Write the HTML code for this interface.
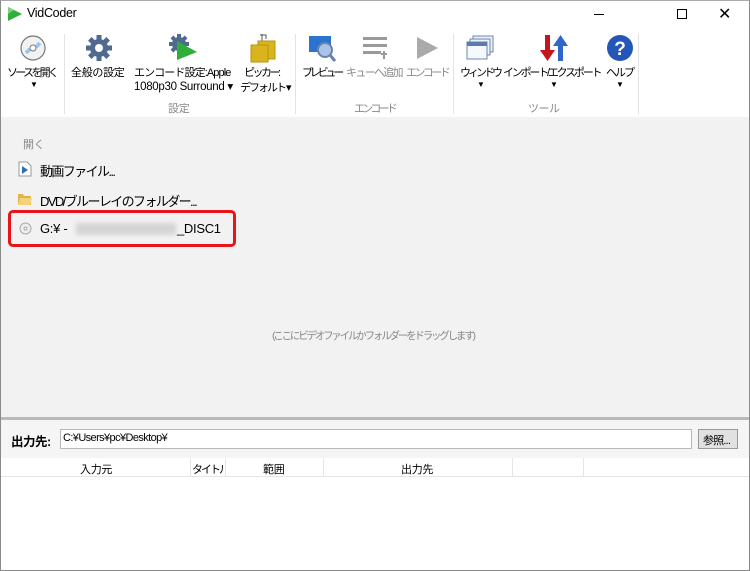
<!DOCTYPE html>
<html><head><meta charset="utf-8">
<style>
*{margin:0;padding:0;box-sizing:border-box}
body{width:750px;height:571px;position:relative;overflow:hidden;background:#fff;font-family:"Liberation Sans","Noto Sans CJK JP",sans-serif;font-size:12px;color:#000}
.a{position:absolute}
.t{position:absolute;white-space:nowrap;font-size:11px;letter-spacing:-0.3px}
.g{color:#888}
.sep{position:absolute;top:34px;width:1px;height:80px;background:#e3e3e3}
</style></head><body>
<div class="a" style="left:0;top:0;width:750px;height:571px;border:1px solid #8a8a8a;border-top-color:#aaa"></div>
<svg class="a" style="left:7px;top:6px" width="16" height="16" viewBox="0 0 16 16"><polygon points="1,1 15,8 1,15" fill="#2fae3a"/><polygon points="1,1 7,4 1,8" fill="#7ed07c"/></svg>
<div class="t" style="left:27px;top:6px;font-size:12.5px">VidCoder</div>
<div class="a" style="left:594px;top:14px;width:10px;height:1px;background:#000"></div>
<div class="a" style="left:677px;top:9px;width:10px;height:10px;border:1px solid #000"></div>
<div class="t" style="left:718px;top:4px;font-size:16px">✕</div>
<div class="a" style="left:1px;top:28px;width:748px;height:89px;background:#fff"></div>
<div class="sep" style="left:64px"></div>
<div class="sep" style="left:295px"></div>
<div class="sep" style="left:453px"></div>
<div class="sep" style="left:638px"></div>
<svg class="a" style="left:20px;top:35px" width="26" height="26" viewBox="0 0 26 26"><circle cx="13" cy="13" r="12" fill="#f2f2f2" stroke="#777" stroke-width="1.2"/><path d="M6 18 L10 14 M16 12 L20 8" stroke="#9cc8ee" stroke-width="4"/><circle cx="13" cy="13" r="3" fill="#fff" stroke="#777"/></svg>
<div class="t" style="left:7px;top:64px;letter-spacing:-2.7px">ソースを開く</div>
<div class="t" style="left:30px;top:80px;font-size:8px">▼</div>
<svg class="a" style="left:85px;top:34px" width="28" height="28" viewBox="0 0 28 28"><g fill="#4f6a8f"><circle cx="14" cy="14" r="9"/><rect x="11.5" y="1" width="5" height="26"/><rect x="1" y="11.5" width="26" height="5"/><rect x="11.5" y="1" width="5" height="26" transform="rotate(45 14 14)"/><rect x="11.5" y="1" width="5" height="26" transform="rotate(-45 14 14)"/></g><circle cx="14" cy="14" r="4" fill="#fff"/></svg>
<div class="t" style="left:71px;top:64px;letter-spacing:-0.3px">全般の設定</div>
<svg class="a" style="left:168px;top:33px" width="30" height="28" viewBox="0 0 30 28"><g fill="#4f6a8f"><circle cx="11" cy="11" r="7"/><rect x="9" y="1" width="4" height="20"/><rect x="1" y="9" width="20" height="4"/><rect x="9" y="1" width="4" height="20" transform="rotate(45 11 11)"/><rect x="9" y="1" width="4" height="20" transform="rotate(-45 11 11)"/></g><polygon points="9,8 29,19 9,27" fill="#2fae3a"/></svg>
<div class="t" style="left:134px;top:64px;letter-spacing:-0.9px">エンコード設定:Apple</div>
<div class="t" style="left:134px;top:79px;font-size:11.5px">1080p30 Surround ▾</div>
<svg class="a" style="left:249px;top:33px" width="28" height="30" viewBox="0 0 28 30"><path d="M11 2h6v4 M13 1v8" stroke="#555" fill="none"/><rect x="9" y="8" width="17" height="18" fill="#d9b51b" stroke="#b59310"/><rect x="2" y="12" width="17" height="17" fill="#d9b51b" stroke="#b59310"/></svg>
<div class="t" style="left:244px;top:64px;letter-spacing:-2.5px">ピッカー:</div>
<div class="t" style="left:240px;top:79px;letter-spacing:-2px">デフォルト ▾</div>
<div class="t g" style="left:168px;top:100px">設定</div>
<svg class="a" style="left:308px;top:35px" width="28" height="28" viewBox="0 0 28 28"><rect x="1" y="1" width="22" height="16" fill="#2a73d0"/><circle cx="17" cy="15" r="7" fill="#a9c4e8" stroke="#6a84a8" stroke-width="2"/><path d="M22 20 L27 26" stroke="#6a84a8" stroke-width="3"/></svg>
<div class="t" style="left:302px;top:64px;letter-spacing:-3.2px">プレビュー</div>
<svg class="a" style="left:362px;top:35px" width="26" height="26" viewBox="0 0 26 26"><g fill="#9a9a9a"><rect x="1" y="2" width="24" height="3"/><rect x="1" y="9" width="24" height="3"/><rect x="1" y="16" width="18" height="3"/><rect x="19" y="18" width="6" height="2"/><rect x="21" y="16" width="2" height="8"/></g></svg>
<div class="t g" style="left:346px;top:64px;letter-spacing:-1.7px">キューへ追加</div>
<svg class="a" style="left:415px;top:36px" width="24" height="24" viewBox="0 0 24 24"><polygon points="2,1 23,12 2,23" fill="#aaa"/></svg>
<div class="t g" style="left:406px;top:64px;letter-spacing:-2.6px">エンコード</div>
<div class="t g" style="left:354px;top:100px;letter-spacing:-2.8px">エンコード</div>
<svg class="a" style="left:466px;top:35px" width="28" height="26" viewBox="0 0 28 26"><rect x="7" y="1" width="20" height="16" fill="#eef3fa" stroke="#6c86b3"/><rect x="4" y="4" width="20" height="16" fill="#eef3fa" stroke="#6c86b3"/><rect x="1" y="7" width="20" height="17" fill="#f5f8fc" stroke="#6c86b3"/><rect x="1" y="7" width="20" height="4" fill="#5d7ab0"/></svg>
<div class="t" style="left:460px;top:64px;letter-spacing:-3px">ウィンドウ</div>
<div class="t" style="left:477px;top:80px;font-size:8px">▼</div>
<svg class="a" style="left:540px;top:34px" width="28" height="28" viewBox="0 0 28 28"><path d="M5 1h5v15h5L7.5 27 0 16h5z" fill="#c8141c"/><path d="M18 27h5V12h5L20.5 1 13 12h5z" fill="#2f66c8"/></svg>
<div class="t" style="left:503px;top:64px;letter-spacing:-2.2px">インポート/エクスポート</div>
<div class="t" style="left:550px;top:80px;font-size:8px">▼</div>
<svg class="a" style="left:606px;top:34px" width="28" height="28" viewBox="0 0 28 28"><circle cx="14" cy="14" r="13" fill="#2456b8"/><text x="14" y="21" text-anchor="middle" font-family="Liberation Sans" font-weight="bold" font-size="19" fill="#fff">?</text></svg>
<div class="t" style="left:606px;top:64px;letter-spacing:-2px">ヘルプ</div>
<div class="t" style="left:616px;top:80px;font-size:8px">▼</div>
<div class="t g" style="left:528px;top:100px;letter-spacing:-0.5px">ツール</div>
<div class="a" style="left:1px;top:117px;width:748px;height:300px;background:#f2f2f2"></div>
<div class="t g" style="left:23px;top:136px;font-size:11px">開く</div>
<svg class="a" style="left:18px;top:161px" width="14" height="16" viewBox="0 0 14 16"><path d="M1 1h8l4 4v10H1z" fill="#fff" stroke="#999"/><polygon points="4,5 10,9 4,13" fill="#2a6fb8"/></svg>
<div class="t" style="left:40px;top:161px;font-size:13px;letter-spacing:-1.6px">動画ファイル...</div>
<svg class="a" style="left:17px;top:192px" width="16" height="14" viewBox="0 0 16 14"><path d="M1 2h5l1 2h7v9H1z" fill="#e0b44a"/><path d="M3 6h12l-2 7H1z" fill="#f3d27a"/></svg>
<div class="t" style="left:40px;top:191px;font-size:13px;letter-spacing:-1.6px">DVD/ブルーレイのフォルダー...</div>
<div class="a" style="left:8px;top:210px;width:228px;height:37px;border:3px solid #e8141a;border-radius:5px"></div>
<svg class="a" style="left:19px;top:222px" width="13" height="13" viewBox="0 0 13 13"><circle cx="6.5" cy="6.5" r="5.5" fill="#eee" stroke="#aaa"/><circle cx="6.5" cy="6.5" r="1.5" fill="#fff" stroke="#aaa"/></svg>
<div class="t" style="left:40px;top:221px;font-size:13px">G:¥ -</div>
<div class="a" style="left:76px;top:223px;width:100px;height:12px;background:#d4d4d4;filter:blur(2px)"></div>
<div class="t" style="left:177px;top:221px;font-size:13px">_DISC1</div>
<div class="t g" style="left:272px;top:328px;font-size:10.5px;letter-spacing:-2.2px">(ここにビデオファイルかフォルダーをドラッグします)</div>
<div class="a" style="left:1px;top:417px;width:748px;height:3px;background:#b9b9b9"></div>
<div class="a" style="left:1px;top:420px;width:748px;height:38px;background:#f5f5f5"></div>
<div class="t" style="left:11px;top:431px;font-size:12.5px;font-weight:bold;letter-spacing:-0.5px">出力先:</div>
<div class="a" style="left:60px;top:429px;width:632px;height:20px;background:#fff;border:1px solid #b8b8b8"></div>
<div class="t" style="left:63px;top:432px;font-size:11px;letter-spacing:-0.6px">C:¥Users¥pc¥Desktop¥</div>
<div class="a" style="left:698px;top:429px;width:40px;height:20px;background:#e1e1e1;border:1px solid #999"></div>
<div class="t" style="left:703px;top:432px;font-size:11px;letter-spacing:-0.8px">参照...</div>
<div class="a" style="left:1px;top:476px;width:748px;height:1px;background:#e5e5e5"></div>
<div class="a" style="left:190px;top:458px;width:1px;height:18px;background:#e5e5e5"></div>
<div class="a" style="left:225px;top:458px;width:1px;height:18px;background:#e5e5e5"></div>
<div class="a" style="left:323px;top:458px;width:1px;height:18px;background:#e5e5e5"></div>
<div class="a" style="left:512px;top:458px;width:1px;height:18px;background:#e5e5e5"></div>
<div class="a" style="left:583px;top:458px;width:1px;height:18px;background:#e5e5e5"></div>
<div class="t" style="left:80px;top:461px;font-size:11px">入力元</div>
<div class="t" style="left:192px;top:461px;font-size:11px;width:32px;overflow:hidden;letter-spacing:-2px">タイトル</div>
<div class="t" style="left:263px;top:461px;font-size:11px">範囲</div>
<div class="t" style="left:401px;top:461px;font-size:11px">出力先</div>
</body></html>
